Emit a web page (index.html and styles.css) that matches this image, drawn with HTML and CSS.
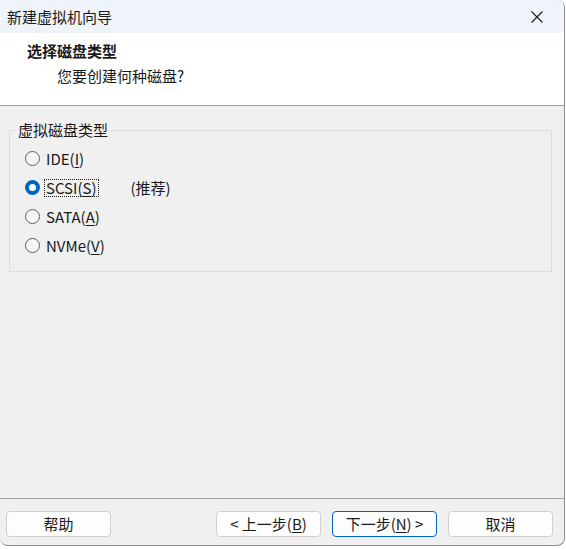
FILE: index.html
```html
<!DOCTYPE HTML>
<html lang="zh-CN">
<head>
  <meta name="viewport" content="width=device-width, initial-scale=1">
  <title>新建虚拟机向导</title>
  <link rel="stylesheet" href="styles.css">
</head>
<body>
  <div class="window">
    <div class="titlebar">
      <span class="title">新建虚拟机向导</span>
      <button class="close-button" aria-label="关闭">
        <svg width="12" height="12" viewBox="0 0 12 12">
          <path d="M0.5 0.5 L11.5 11.5 M11.5 0.5 L0.5 11.5" stroke="#1a1a1a" stroke-width="1.1" fill="none"/>
        </svg>
      </button>
    </div>

    <div class="header">
      <div class="header-title">选择磁盘类型</div>
      <div class="header-subtitle">您要创建何种磁盘?</div>
    </div>

    <div class="content">
      <fieldset class="group">
        <legend>虚拟磁盘类型</legend>
        <div class="radio-row">
          <span class="radio"></span>
          <span class="radio-label">IDE(<u>I</u>)</span>
        </div>
        <div class="radio-row">
          <span class="radio checked"></span>
          <span class="radio-label focused">SCSI(<u>S</u>)</span>
          <span class="note">(推荐)</span>
        </div>
        <div class="radio-row">
          <span class="radio"></span>
          <span class="radio-label">SATA(<u>A</u>)</span>
        </div>
        <div class="radio-row">
          <span class="radio"></span>
          <span class="radio-label">NVMe(<u>V</u>)</span>
        </div>
      </fieldset>
    </div>

    <div class="footer">
      <button class="btn">帮助</button>
      <div class="spacer"></div>
      <button class="btn">&lt; 上一步(<u>B</u>)</button>
      <button class="btn btn-default">下一步(<u>N</u>) &gt;</button>
      <button class="btn">取消</button>
    </div>
  </div>
</body>
</html>
```

FILE: styles.css
```css
/* Base */
:root {
  --dialog-bg: #f0f0f0;
  --title-bg: #eef4f9;
  --text-color: #1a1a1a;
  --line-color: #a0a0a0;
  --group-border: #dcdcdc;
  --accent: #0067c0;
}

body {
  margin: 0;
  background-color: #ffffff;
  font-family: "Noto Sans CJK SC", "Microsoft YaHei UI", sans-serif;
  font-size: 15px;
  color: var(--text-color);
}

/* Window frame */
.window {
  width: 564px;
  height: 545px;
  display: flex;
  flex-direction: column;
  background-color: var(--dialog-bg);
  border-right: 1px solid #8c8c8c;
  border-bottom: 1px solid #8c8c8c;
  border-radius: 0 8px 8px 8px;
  overflow: hidden;
}

.titlebar {
  height: 33px;
  display: flex;
  align-items: center;
  justify-content: space-between;
  background-color: var(--title-bg);
  padding-left: 7px;
}

.title {
  line-height: 20px;
}

.close-button {
  width: 46px;
  height: 33px;
  border: none;
  background: transparent;
  padding: 0;
  margin-right: 4px;
  display: flex;
  align-items: center;
  justify-content: center;
}

/* Header */
.header {
  height: 72px;
  background-color: #ffffff;
  border-bottom: 1px solid var(--line-color);
}

.header-title {
  font-weight: bold;
  line-height: 20px;
  margin: 8px 0 0 27px;
}

.header-subtitle {
  line-height: 20px;
  margin: 5px 0 0 57px;
}

/* Content */
.content {
  flex: 1;
  padding: 14px 12px 0 9px;
}

.group {
  margin: 0;
  height: 152px;
  box-sizing: border-box;
  border: 1px solid var(--group-border);
  padding: 4px 0 0 6px;
}

.group legend {
  padding: 0 2px;
  line-height: 20px;
}

.radio-row {
  height: 29px;
  display: flex;
  align-items: center;
  margin-left: 9px;
}

.radio {
  width: 15px;
  height: 15px;
  box-sizing: border-box;
  border-radius: 50%;
  border: 1px solid #5f5f5f;
  background-color: #f6f6f6;
  margin-right: 4px;
}

.radio.checked {
  border: 4.5px solid var(--accent);
  background-color: #ffffff;
}

.radio-label {
  line-height: 16px;
  padding: 0 1px;
  border: 1px dotted transparent;
}

.radio-label.focused {
  border-color: #1a1a1a;
}

.radio-label u {
  text-underline-offset: 2px;
}

.note {
  margin-left: 32px;
}

/* Footer buttons */
.footer {
  height: 47px;
  box-sizing: border-box;
  border-top: 1px solid var(--line-color);
  display: flex;
  align-items: flex-start;
  gap: 11px;
  padding: 12px 11px 0 6px;
}

.spacer {
  flex: 1;
}

.btn {
  width: 105px;
  height: 26px;
  font-family: inherit;
  font-size: 15px;
  color: var(--text-color);
  background-color: #fdfdfd;
  border: 1px solid #d0d0d0;
  border-radius: 4px;
  padding: 0;
  line-height: 22px;
}

.btn u {
  text-underline-offset: 2px;
}

.btn-default {
  border-color: var(--accent);
}
```
